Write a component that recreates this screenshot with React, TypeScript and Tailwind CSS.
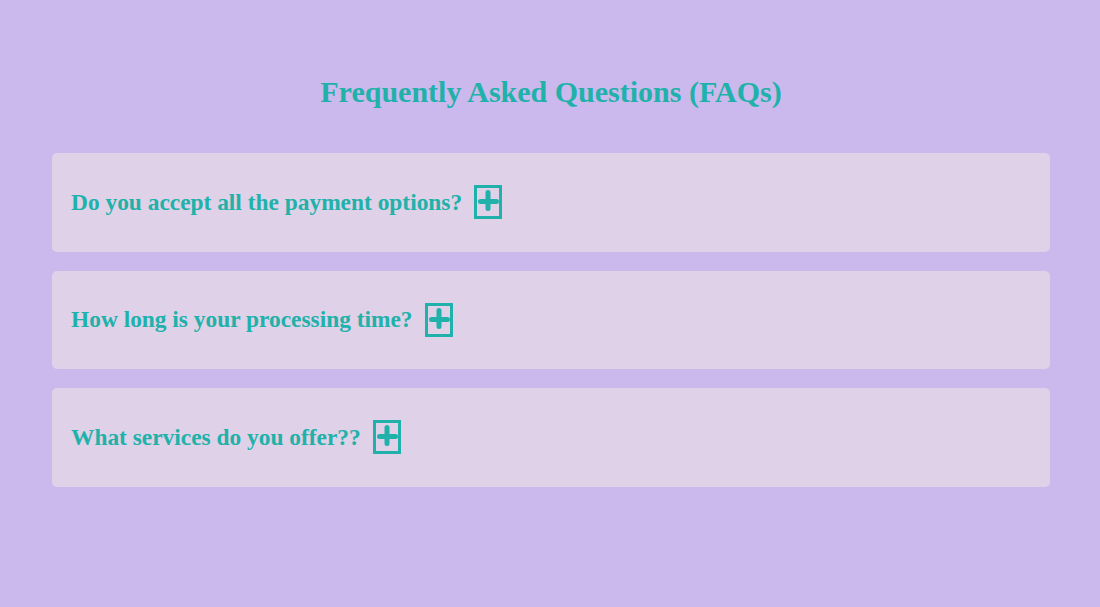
const faqs = [
  'Do you accept all the payment options?',
  'How long is your processing time?',
  'What services do you offer??',
]

function PlusBox() {
  return (
    <span className="inline-flex items-center justify-center w-[28px] h-[34px] border-[3px] border-[#20b2aa] shrink-0">
      <svg width="22" height="22" viewBox="0 0 22 22" className="overflow-visible">
        <path d="M3.5 10.5H19.5M11 1.5V17.5" stroke="#20b2aa" strokeWidth="5" strokeLinecap="round" fill="none" />
      </svg>
    </span>
  )
}

export default function App() {
  return (
    <div className="min-h-[607px] bg-[#cbb8ec] pl-[52px] pr-[50px] pt-[72px] font-['Liberation_Serif','Times_New_Roman',serif] text-[#20b2aa]">
      <h1 className="text-center text-[30px] font-bold leading-[40px] mb-[41px]">
        Frequently Asked Questions (FAQs)
      </h1>
      <div className="flex flex-col gap-[19px]">
        {faqs.map(q => (
          <div key={q} className="h-[98.5px] rounded-[5px] bg-[#dfd1e7] flex items-center px-[19px]">
            <span className="text-[23.4px] font-bold">{q}</span>
            <span className="ml-[12px] flex"><PlusBox /></span>
          </div>
        ))}
      </div>
    </div>
  )
}
